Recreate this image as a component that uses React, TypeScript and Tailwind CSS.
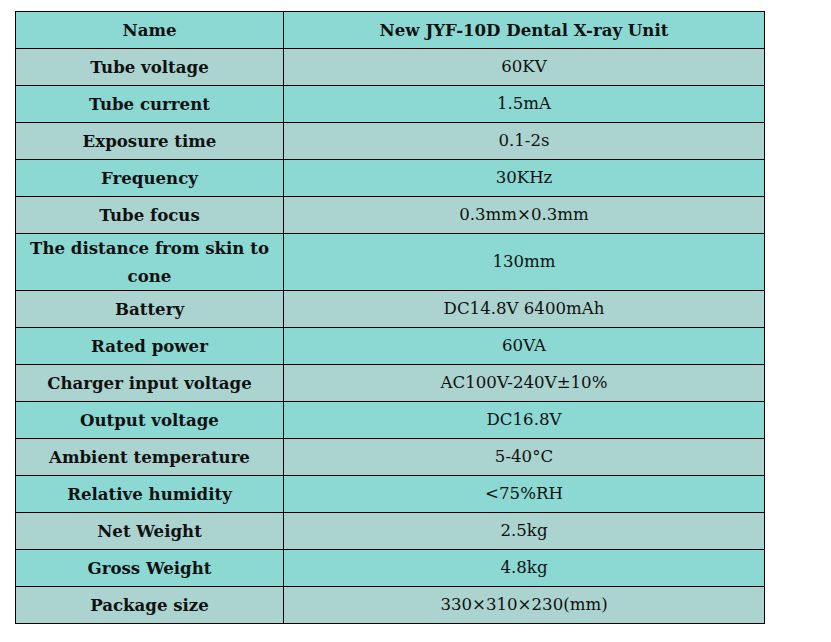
const rows: [string, string][] = [
  ["Tube voltage", "60KV"],
  ["Tube current", "1.5mA"],
  ["Exposure time", "0.1-2s"],
  ["Frequency", "30KHz"],
  ["Tube focus", "0.3mm×0.3mm"],
  ["The distance from skin to cone", "130mm"],
  ["Battery", "DC14.8V 6400mAh"],
  ["Rated power", "60VA"],
  ["Charger input voltage", "AC100V-240V±10%"],
  ["Output voltage", "DC16.8V"],
  ["Ambient temperature", "5-40°C"],
  ["Relative humidity", "<75%RH"],
  ["Net Weight", "2.5kg"],
  ["Gross Weight", "4.8kg"],
  ["Package size", "330×310×230(mm)"],
];

export default function App() {
  return (
    <div className="h-[642px] w-[831px] bg-white pl-[15px] pt-[11px] font-['DejaVu_Serif',serif] text-[16.6px] text-[#111]">
      <table className="w-[750px] border-collapse border border-black text-center">
        <colgroup>
          <col className="w-[268px]" />
          <col />
        </colgroup>
        <tbody>
          <tr className="h-[37px] bg-[#8cd9d4]">
            <td className="border border-black font-bold">Name</td>
            <td className="border border-black font-bold">New JYF-10D Dental X-ray Unit</td>
          </tr>
          {rows.map(([name, value], i) => (
            <tr
              key={name}
              className={`${i === 5 ? "h-[57px]" : "h-[37px]"} ${i % 2 === 0 ? "bg-[#abd4d0]" : "bg-[#8cd9d4]"}`}
            >
              <td className="border border-black px-2 font-bold leading-[28px]">{name}</td>
              <td className="border border-black">{value}</td>
            </tr>
          ))}
        </tbody>
      </table>
    </div>
  );
}
